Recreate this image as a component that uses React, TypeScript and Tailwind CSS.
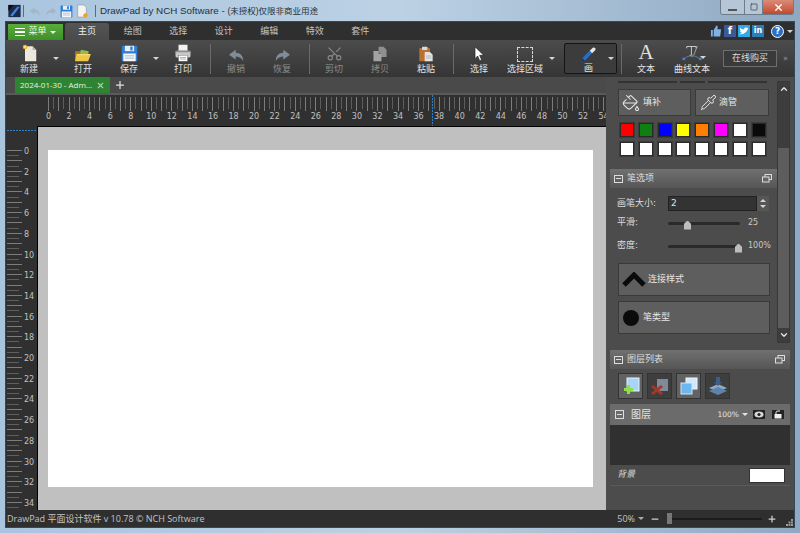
import React from 'react';
import { Scissors, PaintBucket, Pipette, Minus, Plus, X, Square, ChevronUp, ChevronDown } from 'lucide-react';

const uiFont = { fontFamily: '"DejaVu Sans", "Noto Sans CJK SC", sans-serif' };
const thinFont = { fontFamily: '"Open Sans", "Noto Sans CJK SC", sans-serif' };

const tabs = ['绘图', '选择', '设计', '编辑', '特效', '套件'];
const swatchesTop = ['#ff0000', '#0f7f12', '#0000ff', '#ffff00', '#ff8000', '#ff00ff', '#ffffff', '#0a0a0a'];

const AppIcon = () => (
  <svg width="15" height="14" viewBox="0 0 16 16">
    <rect x="1" y="1" width="14" height="14" fill="#1c2a4a" />
    <path d="M3 13 L11 3 L14 3 L6 14 Z" fill="#3f86d8" />
    <path d="M1 1 L7 1 L1 8 Z" fill="#0c0c0c" />
  </svg>
);

const Undo = ({ c = '#7f8c99', flip = false, w = 17 }: { c?: string; flip?: boolean; w?: number }) => (
  <svg width={w} height={w * 0.75} viewBox="0 0 22 17" style={flip ? { transform: 'scaleX(-1)' } : undefined}>
    <path d="M10 1 L1 7.5 L10 14 L10 10 C14 10 17 11.5 20 16 C20 9 16 5 10 5 Z" fill={c} />
  </svg>
);

const SaveIcon = ({ w = 17 }: { w?: number }) => (
  <svg width={w} height={w} viewBox="0 0 22 22">
    <rect x="1" y="1" width="20" height="20" rx="1" fill="#2f7fd6" />
    <rect x="5" y="1" width="12" height="7" fill="#e8eef5" />
    <rect x="12" y="2" width="3" height="5" fill="#2f7fd6" />
    <rect x="3" y="11" width="16" height="10" fill="#f4f6f8" />
    <path d="M5 14 H17 M5 17 H17" stroke="#9ab" strokeWidth="1" />
  </svg>
);

const NewIcon = () => (
  <svg width="15" height="18" viewBox="0 0 20 24">
    <path d="M4 3 H14 L19 8 V23 H4 Z" fill="#ece9dc" />
    <path d="M14 3 V8 H19 Z" fill="#b8b5a6" />
    <circle cx="4" cy="4" r="3" fill="#f3b51c" />
    <circle cx="4" cy="4" r="1.2" fill="#fff3b0" />
  </svg>
);

const OpenIcon = () => (
  <svg width="18" height="13" viewBox="0 0 24 18">
    <path d="M1 3 H9 L11 5 H20 V16 H1 Z" fill="#a8791c" />
    <path d="M9 1 L20 3 L18 8 L8 7 Z" fill="#8fc04a" />
    <path d="M3 7 H23 L19 17 H1 Z" fill="#f0c648" />
    <path d="M4 8 H21" stroke="#fbe79a" strokeWidth="1" />
  </svg>
);

const PrintIcon = () => (
  <svg width="18" height="18" viewBox="0 0 24 24">
    <rect x="6" y="1" width="12" height="8" fill="#f2f2f2" />
    <rect x="2" y="9" width="20" height="9" rx="2" fill="#c8c8c8" />
    <rect x="2" y="9" width="20" height="2" fill="#8c8c8c" />
    <rect x="6" y="15" width="12" height="8" fill="#ffffff" stroke="#555" strokeWidth="0.5" />
    <path d="M8 18 H16 M8 20 H16" stroke="#999" strokeWidth="1" />
  </svg>
);

const CopyIcon = () => (
  <svg width="16" height="16" viewBox="0 0 20 22">
    <path d="M8 1 H15 L19 5 V15 H8 Z" fill="#8f8f8f" />
    <path d="M1 7 H8 L12 11 V21 H1 Z" fill="#a3a3a3" />
    <path d="M8 7 V11 H12 Z" fill="#6e6e6e" />
  </svg>
);

const PasteIcon = () => (
  <svg width="16" height="16" viewBox="0 0 22 24">
    <rect x="1" y="3" width="16" height="20" rx="1" fill="#b9712f" />
    <rect x="5" y="1" width="8" height="5" rx="1" fill="#d9d9d9" />
    <path d="M9 9 H17 L21 13 V23 H9 Z" fill="#e4e4e4" />
    <path d="M11 15 H19 M11 18 H19" stroke="#a0a0a0" strokeWidth="1" />
  </svg>
);

const CursorIcon = () => (
  <svg width="12" height="16" viewBox="0 0 18 24">
    <path d="M3 1 V19 L7 15 L10 22 L13 21 L10 14 L16 14 Z" fill="#ffffff" stroke="#222" strokeWidth="1" />
  </svg>
);

const BrushIcon = () => (
  <svg width="17" height="16" viewBox="0 0 28 26">
    <path d="M2 24 L4 18 L16 6 L20 10 L8 22 Z" fill="#2a6fc4" />
    <path d="M16 6 L21 1 Q24 0 25 2 Q26 4 25 5 L20 10 Z" fill="#e6e6e6" />
    <path d="M2 24 L4 18 L8 22 Z" fill="#123a6e" />
  </svg>
);

const CurveTextIcon = () => (
  <svg width="20" height="18" viewBox="0 0 34 26">
    <path d="M8 2 H24 M8 2 V5 M24 2 V5 M16 2 V17 M13 17 H19" stroke="#d8d8d8" strokeWidth="1.5" fill="none" />
    <path d="M26 1 L20 17" stroke="#d8d8d8" strokeWidth="1" />
    <path d="M3 23 Q16 12 31 23" stroke="#9a9a9a" strokeWidth="1" fill="none" />
    <circle cx="3" cy="23" r="2.5" fill="#3f86d8" />
    <circle cx="31" cy="23" r="2.5" fill="#3f86d8" />
    <circle cx="17" cy="18" r="2" fill="#3f86d8" />
  </svg>
);

const Caret = ({ c = '#d5d5d5' }: { c?: string }) => (
  <svg width="6" height="3" viewBox="0 0 8 4">
    <path d="M0 0 H8 L4 4 Z" fill={c} />
  </svg>
);

const TopRuler = () => {
  const ticks = [];
  for (let i = 0; i <= 108; i++) {
    const x = Math.round(42 + i * 5.14) + 0.5;
    ticks.push(<line key={i} x1={x} x2={x} y1={2} y2={i % 2 === 0 ? 16 : 14} stroke={i % 2 === 0 ? '#7c7c7c' : '#5e5e5e'} />);
  }
  const labels = [];
  for (let n = 0; n <= 54; n += 2) {
    labels.push(
      <text key={n} x={42.5 + n * 10.28} y={24} fontSize="8" fill="#c0c0c0" textAnchor="middle" fontFamily="DejaVu Sans, sans-serif">
        {n}
      </text>
    );
  }
  return (
    <svg width="600" height="31" className="block bg-[#303030]">
      {ticks}
      {labels}
      <line x1="426.5" x2="426.5" y1="0" y2="31" stroke="#2f7fc8" strokeDasharray="2 1" />
    </svg>
  );
};

const LeftRuler = () => {
  const ticks = [];
  for (let i = 0; i <= 74; i++) {
    const y = Math.round(24 + i * 5.175) + 0.5;
    ticks.push(<line key={i} x1={1} x2={i % 2 === 0 ? 16 : 13} y1={y} y2={y} stroke={i % 2 === 0 ? '#7c7c7c' : '#5e5e5e'} />);
  }
  const labels = [];
  for (let n = 0; n <= 34; n += 2) {
    labels.push(
      <text key={n} x={18} y={28 + n * 10.35} fontSize="8" fill="#c0c0c0" fontFamily="DejaVu Sans, sans-serif">
        {n}
      </text>
    );
  }
  return (
    <svg width="31" height="384" className="block shrink-0 bg-[#303030]">
      {ticks}
      {labels}
      <line x1="1" x2="31" y1="4.5" y2="4.5" stroke="#2f7fc8" strokeDasharray="2 1" />
    </svg>
  );
};

const ToolBtn = ({ icon, label, off }: { icon: React.ReactNode; label: string; off?: boolean }) => (
  <div className="w-[46px] shrink-0 flex flex-col items-center">
    <div className="h-[20px] flex items-end justify-center">{icon}</div>
    <div className={`mt-[1px] text-[9px] leading-[12px] whitespace-nowrap ${off ? 'text-[#8b8b8b]' : 'text-[#e2e2e2]'}`}>{label}</div>
  </div>
);

const ArrowSlot = () => (
  <div className="w-[8px] h-[3px] shrink-0 flex justify-center items-center">
    <Caret />
  </div>
);

const Sep = ({ tight }: { tight?: boolean }) => (
  <div className={`w-[1px] h-[30px] ml-[4px] shrink-0 bg-[#6a6a6a] ${tight ? 'mr-[1px]' : 'mr-[2px]'}`} />
);

const SectionHead = ({ title }: { title: string }) => (
  <div className="h-[19px] flex items-center px-[4px] bg-gradient-to-b from-[#707070] to-[#565656] text-[9px] text-[#dddddd]">
    <div className="w-[9px] h-[8px] border border-[#dddddd] flex items-center justify-center mr-[4px]">
      <div className="w-[5px] h-[1px] bg-[#dddddd]" />
    </div>
    <span className="flex-1">{title}</span>
    <svg width="10" height="9" viewBox="0 0 10 9" className="mr-[1px]">
      <rect x="3" y="0.5" width="6.5" height="5" fill="none" stroke="#ddd" />
      <rect x="0.5" y="3" width="6.5" height="5" fill="#666" stroke="#ddd" />
    </svg>
  </div>
);

const PanelBtn = ({ children, cls }: { children: React.ReactNode; cls: string }) => (
  <div className={`flex items-center border border-[#3a3a3a] bg-[#5e5e5e] text-[9px] text-[#e6e6e6] ${cls}`}>{children}</div>
);

const Slider = ({ at, value }: { at: number; value: string }) => (
  <div className="flex-1 flex items-center">
    <div className="relative w-[72px] h-[3px] rounded-full bg-[#2a2a2a]">
      <div className="absolute top-[-1px] w-[7px] h-[9px] bg-[#bdbdbd]" style={{ left: at, clipPath: 'polygon(50% 0, 100% 35%, 100% 100%, 0 100%, 0 35%)' }} />
    </div>
    <span className="ml-[8px] text-[8px] text-[#c8c8c8]">{value}</span>
  </div>
);

const LayerBtn = ({ active, children }: { active?: boolean; children: React.ReactNode }) => (
  <div className={`w-[25px] h-[26px] flex items-center justify-center border border-[#333333] ${active ? 'bg-[#626262]' : 'bg-[#3e3e3e]'}`}>{children}</div>
);

export default function App() {
  return (
    <div className="w-[800px] h-[533px] overflow-hidden flex flex-col bg-gradient-to-r from-[#a9c5de] via-[#bcd1e4] to-[#8fa9c2]" style={uiFont}>
      {/* window title */}
      <div className="h-[22px] shrink-0 flex items-center pl-[7px]">
        <AppIcon />
        <div className="w-[1px] h-[12px] bg-[#667] ml-[1px]" />
        <div className="ml-[5px]"><Undo c="#a3b5c7" w={12} /></div>
        <div className="ml-[4px]"><Undo c="#a3b5c7" w={12} flip /></div>
        <div className="ml-[3px]"><SaveIcon w={13} /></div>
        <svg width="12" height="14" viewBox="0 0 14 16" className="ml-[3px]">
          <path d="M2 1 H9 L12 4 V15 H2 Z" fill="#f4f4f4" stroke="#777" strokeWidth="0.5" />
          <circle cx="11" cy="13" r="2.5" fill="#f0a020" />
        </svg>
        <div className="w-[1px] h-[12px] bg-[#667] ml-[7px] mr-[4px]" />
        <span className="text-[9.8px] text-[#26303a] whitespace-nowrap" style={{ fontFamily: '"Liberation Sans", "Noto Sans CJK SC", sans-serif' }}>
          DrawPad by NCH Software - <span className="text-[8.5px]">(未授权)仅限非商业用途</span>
        </span>
        <div className="ml-auto mr-[6px] self-start flex h-[15px] rounded-b-[3px] overflow-hidden border border-t-0 border-[#6b7c8c]">
          <div className="w-[23px] flex items-end justify-center pb-[3px] bg-[#b6c6d6]"><div className="w-[9px] h-[2px] bg-white border border-[#555]" /></div>
          <div className="w-[19px] flex items-center justify-center bg-[#b6c6d6] border-x border-[#6b7c8c]"><Square size={8} color="#333" /></div>
          <div className="w-[30px] flex items-center justify-center bg-gradient-to-b from-[#d98b78] to-[#c1492c]"><X size={11} color="#fff" strokeWidth={3} /></div>
        </div>
      </div>

      <div className="flex-1 min-h-0 mx-[6px] mb-[6px] flex flex-col bg-[#4a4a4a] outline outline-1 outline-[#38485a]">
        {/* ribbon tabs */}
        <div className="h-[18px] shrink-0 flex items-end bg-[#2f2f2f] pl-[2px] text-[9px]">
          <div className="w-[55px] h-[16px] flex items-center justify-center gap-[3px] bg-gradient-to-b from-[#58ad3a] to-[#3e8f2a] text-[#eef7ea]">
            <div className="flex flex-col gap-[2px]">
              <div className="w-[10px] h-[1.5px] bg-white" />
              <div className="w-[10px] h-[1.5px] bg-white" />
              <div className="w-[10px] h-[1.5px] bg-white" />
            </div>
            <span>菜单</span>
            <Caret c="#eef7ea" />
          </div>
          <div className="ml-[2px] w-[44px] h-[17px] flex items-center justify-center rounded-t-[3px] bg-gradient-to-b from-[#555555] to-[#4a4a4a] text-[#f0f0f0]">主页</div>
          <div className="flex ml-[1px]">
            {tabs.map(t => (
              <div key={t} className="w-[45.5px] h-[16px] flex items-center justify-center text-[#c4c4c4]">{t}</div>
            ))}
          </div>
          <div className="ml-auto self-center flex items-center gap-[2px] mr-[1px]">
            <svg width="12" height="12" viewBox="0 0 13 12">
              <path d="M1 5 H3 V12 H1 Z M4 5 L7 0 Q9 0 8 4 H12 L11 12 H4 Z" fill="#7fb2e5" />
            </svg>
            <div className="w-[12px] h-[12px] bg-[#3b5a9a] text-white text-[10px] leading-[12px] font-bold text-center">f</div>
            <div className="w-[12px] h-[12px] bg-[#2fa9e8] flex items-center justify-center">
              <svg width="10" height="8" viewBox="0 0 10 8"><path d="M0 7 Q4 8 7 5 Q9 3 9 1 L7 0.5 Q5 0 5 2.5 Q2 2.5 1 0.5 Q0.5 3 2 4 L1 4 Q1.5 5.5 3 5.5 Q2 6.5 0 7 Z" fill="#fff" /></svg>
            </div>
            <div className="w-[12px] h-[12px] bg-[#2a7fb8] text-white text-[8px] leading-[12px] font-bold text-center">in</div>
            <div className="w-[13px] h-[13px] ml-[5px] rounded-full border border-white bg-[#2c6fc6] text-white text-[9px] leading-[11px] font-bold text-center">?</div>
            <div className="ml-[1px] flex items-center"><Caret /></div>
          </div>
        </div>

        {/* ribbon */}
        <div className="h-[37px] shrink-0 flex items-center bg-gradient-to-b from-[#4c4c4c] to-[#353535]">
          <ToolBtn icon={<NewIcon />} label="新建" />
          <ArrowSlot />
          <ToolBtn icon={<OpenIcon />} label="打开" />
          <ToolBtn icon={<SaveIcon />} label="保存" />
          <ArrowSlot />
          <ToolBtn icon={<PrintIcon />} label="打印" />
          <Sep />
          <ToolBtn icon={<Undo />} label="撤销" off />
          <ToolBtn icon={<Undo flip />} label="恢复" off />
          <Sep tight />
          <ToolBtn icon={<Scissors size={17} color="#8b8b8b" strokeWidth={1.5} className="-rotate-90" />} label="剪切" off />
          <ToolBtn icon={<CopyIcon />} label="拷贝" off />
          <ToolBtn icon={<PasteIcon />} label="粘贴" />
          <Sep />
          <ToolBtn icon={<CursorIcon />} label="选择" />
          <ToolBtn icon={<div className="w-[16px] h-[15px] border border-dashed border-[#d8d8d8]" />} label="选择区域" />
          <ArrowSlot />
          <div className="relative w-[53px] h-[31px] ml-[8px] shrink-0 flex flex-col items-center rounded-[2px] border border-[#151515] bg-[#3c3c3c]">
            <div className="h-[18px] mt-[1px] flex items-end pr-[4px]"><BrushIcon /></div>
            <div className="text-[9px] leading-[10px] text-[#e2e2e2] pr-[4px]">画</div>
            <div className="absolute right-[2px] top-[13px] flex"><Caret /></div>
          </div>
          <div className="w-[1px] h-[30px] ml-[4px] mr-[1px] bg-[#6a6a6a]" />
          <ToolBtn icon={<span className="text-[21px] leading-[20px] text-[#e0e0e0]" style={{ fontFamily: '"Liberation Serif", serif' }}>A</span>} label="文本" />
          <ToolBtn icon={<CurveTextIcon />} label="曲线文本" />
          <div className="w-[8px] h-[3px] shrink-0 ml-[-16px] mb-[2px] flex justify-center"><Caret /></div>
          <div className="w-[54px] h-[17px] ml-[16px] shrink-0 flex items-center justify-center border border-[#6e6e6e] bg-[#3a3a3a] text-[9px] text-[#dcdcdc]">在线购买</div>
          <span className="ml-[6px] text-[8px] text-[#9a9a9a]">»</span>
        </div>

        <div className="flex-1 min-h-0 flex">
          {/* workspace */}
          <div className="w-[600px] shrink-0 flex flex-col">
            <div className="h-[18px] shrink-0 flex items-end pl-[9px] bg-[#4a4a4a] border-b-[2px] border-[#5a5a5a]">
              <div className="w-[95px] h-[16px] flex items-center justify-between px-[5px] bg-[#2e8432] text-[8px] text-[#e6f2e6]" style={thinFont}>
                <span className="whitespace-nowrap">2024-01-30 - Adm...</span>
                <X size={9} color="#b9c9b9" strokeWidth={3} />
              </div>
              <Plus size={12} color="#e0e0e0" strokeWidth={2.5} className="ml-[4px] mb-[2px]" />
            </div>
            <TopRuler />
            <div className="flex-1 min-h-0 flex">
              <LeftRuler />
              <div className="flex-1 border-t-[1px] border-l-[1px] border-black bg-[#c0c0c0] pl-[10px] pt-[23px]">
                <div className="w-[545px] h-[337px] bg-white" />
              </div>
            </div>
          </div>

          {/* side panel */}
          <div className="flex-1 min-w-0 flex flex-col pl-[4px] pr-[4px] bg-[#4c4c4c]">
            <div className="h-[266px] shrink-0 flex mb-[2px]">
              <div className="w-[167px] shrink-0 flex flex-col">
                <div className="flex pl-[8px] pt-[4px] gap-[3px]">
                  <div className="w-[59px] h-[2px] bg-[#333333]" />
                  <div className="w-[25px] h-[2px] bg-[#333333]" />
                  <div className="w-[59px] h-[2px] bg-[#333333]" />
                </div>
                <div className="flex pl-[8px] pt-[6px] gap-[4px]">
                  <PanelBtn cls="w-[73px] h-[27px] pl-[3px] gap-[3px]">
                    <PaintBucket size={18} color="#e8e8e8" strokeWidth={1.4} />
                    <span>填补</span>
                  </PanelBtn>
                  <PanelBtn cls="w-[74px] h-[27px] pl-[4px] gap-[2px]">
                    <Pipette size={17} color="#e8e8e8" strokeWidth={1.4} />
                    <span>滴管</span>
                  </PanelBtn>
                </div>
                <div className="flex pl-[10px] pt-[7px] gap-[4.8px]">
                  {swatchesTop.map((c, i) => (
                    <div key={i} className="w-[14px] h-[14px] border border-[#2a2a2a] outline outline-1 outline-[#3c3c3c]" style={{ background: c }} />
                  ))}
                </div>
                <div className="flex pl-[10px] pt-[5px] gap-[4.8px]">
                  {swatchesTop.map((_, i) => (
                    <div key={i} className="w-[14px] h-[14px] bg-white border border-[#2a2a2a] outline outline-1 outline-[#3c3c3c]" />
                  ))}
                </div>
                <div className="mt-[13px]"><SectionHead title="笔选项" /></div>
                <div className="flex items-center pl-[7px] mt-[8px] text-[9px] text-[#dcdcdc]">
                  <span className="w-[51px]">画笔大小:</span>
                  <div className="w-[89px] h-[15px] bg-[#333333] border border-[#222222] pl-[2px] text-[9px] leading-[13px] text-[#e0e0e0]">2</div>
                  <div className="w-[12px] h-[15px] flex flex-col items-center justify-center gap-[3px] bg-[#565656]">
                    <div className="rotate-180 flex"><Caret /></div>
                    <div className="flex"><Caret /></div>
                  </div>
                </div>
                <div className="flex items-center pl-[7px] mt-[2px] h-[20px] text-[9px] text-[#dcdcdc]">
                  <span className="w-[51px]">平滑:</span>
                  <Slider at={16} value="25" />
                </div>
                <div className="flex items-center pl-[7px] mt-[3px] h-[20px] text-[9px] text-[#dcdcdc]">
                  <span className="w-[51px]">密度:</span>
                  <Slider at={67} value="100%" />
                </div>
                <div className="pl-[8px] mt-[7px]">
                  <PanelBtn cls="w-[152px] h-[33px] pl-[3px] gap-[2px]">
                    <svg width="24" height="16" viewBox="0 0 24 16">
                      <path d="M2 13 L12 3 L22 13" stroke="#0b0b0b" strokeWidth="5" fill="none" />
                    </svg>
                    <span>连接样式</span>
                  </PanelBtn>
                </div>
                <div className="pl-[8px] mt-[5px]">
                  <PanelBtn cls="w-[152px] h-[33px] pl-[4px] gap-[4px]">
                    <div className="w-[16px] h-[16px] rounded-full bg-[#0b0b0b]" />
                    <span>笔类型</span>
                  </PanelBtn>
                </div>
              </div>
              <div className="w-[13px] shrink-0 mt-[4px] flex flex-col border border-[#383838] bg-[#3d3d3d]">
                <div className="h-[14px] flex items-center justify-center">
                  <ChevronUp size={10} color="#e8e8e8" strokeWidth={3} />
                </div>
                <div className="h-[52px]" />
                <div className="flex-1 bg-[#5d5d5d]" />
                <div className="h-[14px] flex items-center justify-center">
                  <ChevronDown size={10} color="#e8e8e8" strokeWidth={3} />
                </div>
              </div>
            </div>
            <div className="mt-[5px]"><SectionHead title="图层列表" /></div>
            <div className="flex gap-[4px] pl-[8px] mt-[4px]">
              <LayerBtn active>
                <svg width="20" height="20" viewBox="0 0 20 20">
                  <rect x="6" y="2" width="12" height="13" fill="#a8d4f5" stroke="#e6f3fc" />
                  <path d="M6 9 H9 V12 H12 V15 H9 V18 H6 V15 H3 V12 H6 Z" fill="#8de04a" />
                </svg>
              </LayerBtn>
              <LayerBtn>
                <svg width="20" height="20" viewBox="0 0 20 20">
                  <rect x="7" y="3" width="11" height="12" fill="#7d8c98" />
                  <path d="M3 9 L7 12 L11 9 L13 11 L9 14 L13 17 L11 19 L7 16 L3 19 L1 17 L5 14 L1 11 Z" fill="#a8352a" />
                </svg>
              </LayerBtn>
              <LayerBtn active>
                <svg width="20" height="20" viewBox="0 0 20 20">
                  <rect x="7" y="2" width="11" height="11" fill="#cfe8fb" stroke="#eef7fd" />
                  <rect x="2" y="7" width="11" height="11" fill="#6db6ee" stroke="#cfe8fb" />
                </svg>
              </LayerBtn>
              <LayerBtn>
                <svg width="20" height="20" viewBox="0 0 20 20">
                  <path d="M10 8 L19 12 L10 16 L1 12 Z" fill="#8fa9c4" />
                  <path d="M10 11 L19 15 L10 19 L1 15 Z" fill="#5f84ac" />
                  <path d="M8 1 H12 V6 H14 L10 10 L6 6 H8 Z" fill="#3d5f86" />
                </svg>
              </LayerBtn>
            </div>
            <div className="h-[21px] mt-[5px] flex items-center px-[5px] bg-[#6b6b6b] text-[#e4e4e4]">
              <div className="w-[9px] h-[9px] border border-[#dddddd] flex items-center justify-center mr-[7px]">
                <div className="w-[5px] h-[1px] bg-[#dddddd]" />
              </div>
              <span className="flex-1 text-[10px]">图层</span>
              <span className="text-[7.5px] mr-[3px]">100%</span>
              <Caret c="#e4e4e4" />
              <svg width="12" height="9" viewBox="0 0 12 9" className="ml-[5px] bg-[#222222]">
                <ellipse cx="6" cy="4.5" rx="4.5" ry="3" fill="#d8d8d8" />
                <circle cx="6" cy="4.5" r="1.6" fill="#222" />
              </svg>
              <svg width="12" height="9" viewBox="0 0 12 9" className="ml-[7px] mr-[1px] bg-[#222222]">
                <rect x="2.5" y="4" width="7" height="4.5" fill="#eee" />
                <path d="M4 4 V2.5 Q4 1 6 1 H8" stroke="#eee" fill="none" />
              </svg>
            </div>
            <div className="h-[40px] bg-[#303030]" />
            <div className="h-[21px] flex items-center justify-between pl-[7px] pr-[5px] border-b border-[#5a5a5a]">
              <span className="text-[9px] italic text-[#d0d0d0]">背景</span>
              <div className="w-[36px] h-[15px] bg-white border border-[#333333]" />
            </div>
          </div>
        </div>

        {/* status */}
        <div className="relative h-[17px] shrink-0 flex items-center bg-[#2f2f2f] pl-[1px] text-[9px] text-[#c4c4c4]" style={thinFont}>
          <span className="whitespace-nowrap">DrawPad 平面设计软件 v 10.78 © NCH Software</span>
          <div className="ml-auto flex items-center text-[#c4c4c4]">
            <span className="text-[9px]">50%</span>
            <div className="ml-[3px] flex"><Caret c="#aaa" /></div>
            <Minus size={10} color="#d0d0d0" strokeWidth={3} className="ml-[6px]" />
            <div className="relative w-[94px] h-[2px] ml-[8px] bg-[#1c1c1c]">
              <div className="absolute left-[-1px] top-[-5px] w-[5px] h-[11px] bg-[#777777]" />
            </div>
            <Plus size={10} color="#d0d0d0" strokeWidth={3} className="ml-[5px] mr-[17px]" />
          </div>
          <svg width="7" height="7" viewBox="0 0 7 7" className="absolute right-[1px] bottom-[1px]">
            <path d="M5 0 h2 v2 h-2 Z M2.5 2.5 h2 v2 h-2 Z M5 2.5 h2 v2 h-2 Z M0 5 h2 v2 h-2 Z M2.5 5 h2 v2 h-2 Z M5 5 h2 v2 h-2 Z" fill="#9a9a9a" />
          </svg>
        </div>
      </div>
    </div>
  );
}
